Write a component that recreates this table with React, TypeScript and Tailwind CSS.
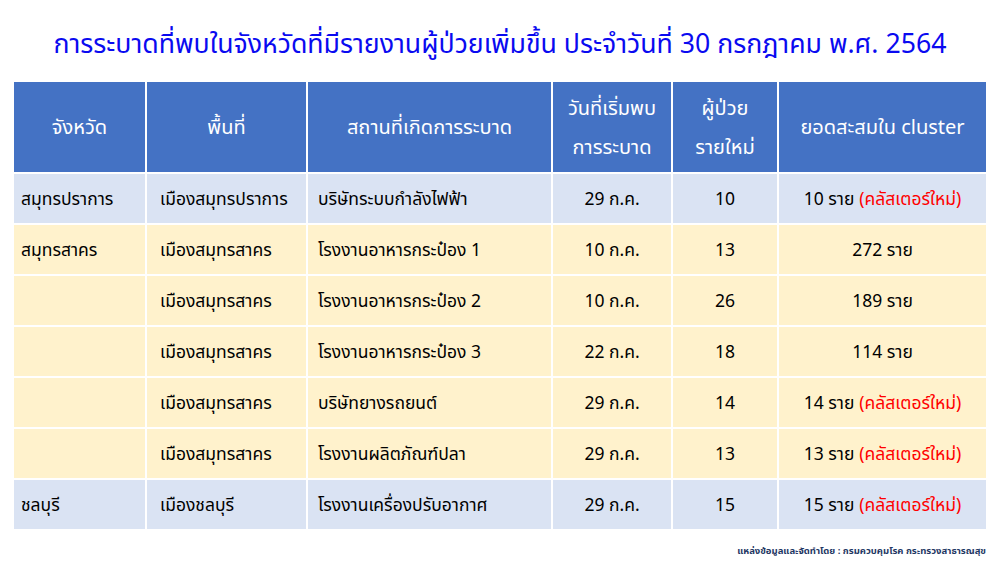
import React from 'react'

type Row = {
  province: string
  area: string
  place: string
  date: string
  cases: string
  total: string
  isNew: boolean
  tone: 'blue' | 'yellow'
}

const ROWS: Row[] = [
  { province: 'สมุทรปราการ', area: 'เมืองสมุทรปราการ', place: 'บริษัทระบบกำลังไฟฟ้า', date: '29 ก.ค.', cases: '10', total: '10 ราย', isNew: true, tone: 'blue' },
  { province: 'สมุทรสาคร', area: 'เมืองสมุทรสาคร', place: 'โรงงานอาหารกระป๋อง 1', date: '10 ก.ค.', cases: '13', total: '272 ราย', isNew: false, tone: 'yellow' },
  { province: '', area: 'เมืองสมุทรสาคร', place: 'โรงงานอาหารกระป๋อง 2', date: '10 ก.ค.', cases: '26', total: '189 ราย', isNew: false, tone: 'yellow' },
  { province: '', area: 'เมืองสมุทรสาคร', place: 'โรงงานอาหารกระป๋อง 3', date: '22 ก.ค.', cases: '18', total: '114 ราย', isNew: false, tone: 'yellow' },
  { province: '', area: 'เมืองสมุทรสาคร', place: 'บริษัทยางรถยนต์', date: '29 ก.ค.', cases: '14', total: '14 ราย', isNew: true, tone: 'yellow' },
  { province: '', area: 'เมืองสมุทรสาคร', place: 'โรงงานผลิตภัณฑ์ปลา', date: '29 ก.ค.', cases: '13', total: '13 ราย', isNew: true, tone: 'yellow' },
  { province: 'ชลบุรี', area: 'เมืองชลบุรี', place: 'โรงงานเครื่องปรับอากาศ', date: '29 ก.ค.', cases: '15', total: '15 ราย', isNew: true, tone: 'blue' },
]

const FONT = { fontFamily: 'Tahoma, "Noto Sans", "Noto Sans Thai", sans-serif' }

export default function App() {
  return (
    <div className="w-[1000px] h-[563px] bg-white overflow-hidden" style={FONT}>
      <h1 className="h-[82px] pt-[26px] text-center text-[26.7px] leading-[34px] text-[#0a0af0]">
        การระบาดที่พบในจังหวัดที่มีรายงานผู้ป่วยเพิ่มขึ้น ประจำวันที่ 30 กรกฎาคม พ.ศ. 2564
      </h1>

      <div className="mx-[14px] grid grid-cols-[131px_159px_243px_118px_104px_207px] gap-[2px] text-[17.5px]">
        {['จังหวัด', 'พื้นที่', 'สถานที่เกิดการระบาด'].map((h) => (
          <div key={h} className="h-[90px] bg-[#4472c4] text-white text-[20px] flex items-center justify-center">
            {h}
          </div>
        ))}
        <div className="h-[90px] bg-[#4472c4] text-white text-[20px] flex flex-col items-center justify-center leading-[39px]">
          <span>วันที่เริ่มพบ</span>
          <span>การระบาด</span>
        </div>
        <div className="h-[90px] bg-[#4472c4] text-white text-[20px] flex flex-col items-center justify-center leading-[39px]">
          <span>ผู้ป่วย</span>
          <span>รายใหม่</span>
        </div>
        <div className="h-[90px] bg-[#4472c4] text-white text-[20px] flex items-center justify-center">
          ยอดสะสมใน cluster
        </div>

        {ROWS.map((r, i) => {
          const bg = r.tone === 'blue' ? 'bg-[#dae3f3]' : 'bg-[#fff2cc]'
          const cell = `h-[49px] ${bg} flex items-center text-black`
          return (
            <React.Fragment key={i}>
              <div className={`${cell} pl-[7px]`}>{r.province}</div>
              <div className={`${cell} pl-[13px]`}>{r.area}</div>
              <div className={`${cell} pl-[10px]`}>{r.place}</div>
              <div className={`${cell} justify-center`}>{r.date}</div>
              <div className={`${cell} justify-center`}>{r.cases}</div>
              <div className={`${cell} justify-center gap-[5px]`}>
                <span>{r.total}</span>
                {r.isNew && <span className="text-[#ff0000]">(คลัสเตอร์ใหม่)</span>}
              </div>
            </React.Fragment>
          )
        })}
      </div>

      <div className="mx-[14px] mt-[15px] text-right text-[9.5px] font-bold text-[#1f3864]">
        แหล่งข้อมูลและจัดทำโดย : กรมควบคุมโรค กระทรวงสาธารณสุข
      </div>
    </div>
  )
}
